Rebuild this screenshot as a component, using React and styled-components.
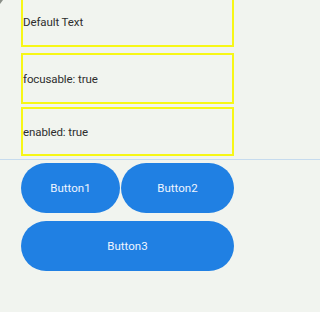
import React from 'react';
import styled, { createGlobalStyle } from 'styled-components';

const Global = createGlobalStyle`
  html, body {
    margin: 0;
    padding: 0;
    background: #f1f4ef;
  }
  body {
    font-family: Roboto, "Noto Sans", sans-serif;
  }
`;

const Page = styled.div`
  width: 100%;
  height: 312px;
  overflow: hidden;
  position: relative;
`;

const Corner = styled.div`
  position: absolute;
  left: 0;
  top: 0;
  width: 0;
  height: 0;
  border-top: 4px solid #8a8f88;
  border-right: 3px solid transparent;
`;

const Content = styled.div`
  width: 213px;
  margin-left: 21px;
`;

const List = styled.div`
  display: flex;
  flex-direction: column;
  margin-top: -3px;
`;

const Item = styled.div`
  box-sizing: border-box;
  height: ${(p) => p.h || 50}px;
  margin-top: ${(p) => p.mt || 0}px;
  border: 2px solid #f7f716;
  display: flex;
  align-items: center;
  font-size: 11.5px;
  color: #2e2e2e;
  letter-spacing: -0.1px;
`;

const Divider = styled.div`
  height: 1px;
  background: #c6dbee;
  margin: 3px 0;
`;

const Buttons = styled.div`
  display: flex;
  flex-direction: column;
  gap: 8px;
`;

const Row = styled.div`
  display: flex;
  gap: 1px;
`;

const Button = styled.button`
  box-sizing: border-box;
  height: 50px;
  width: ${(p) => (p.w ? `${p.w}px` : '100%')};
  flex: ${(p) => (p.grow ? '1 1 0' : '0 0 auto')};
  border: none;
  border-radius: 25px;
  background: #2080e3;
  color: #eef5ff;
  font-family: Roboto, "Noto Sans", sans-serif;
  font-size: 11.5px;
  padding: 0;
  cursor: pointer;
`;

export default function App() {
  return (
    <Page>
      <Global />
      <Corner />
      <Content>
        <List>
          <Item h={50}>Default Text</Item>
          <Item h={51} mt={6}>focusable: true</Item>
          <Item h={49} mt={3}>enabled: true</Item>
        </List>
      </Content>
      <Divider />
      <Content>
        <Buttons>
          <Row>
            <Button w={99}>Button1</Button>
            <Button grow>Button2</Button>
          </Row>
          <Button>Button3</Button>
        </Buttons>
      </Content>
    </Page>
  );
}
